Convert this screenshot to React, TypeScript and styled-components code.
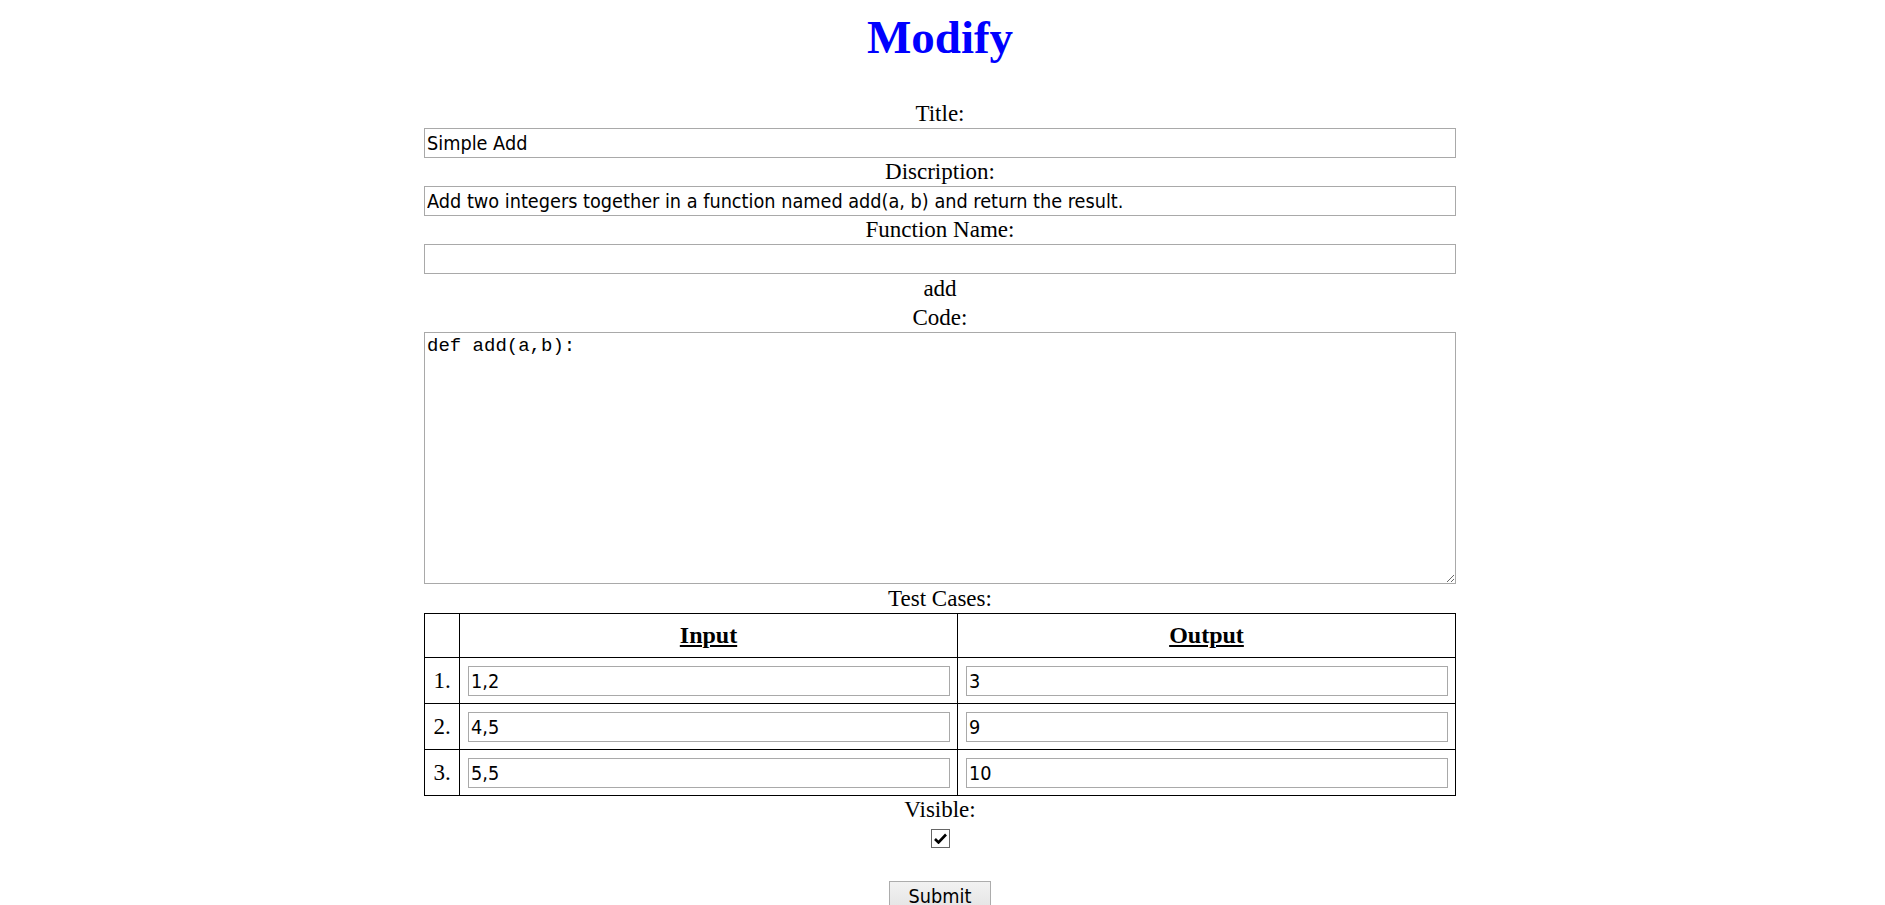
import React from "react";
import styled, { createGlobalStyle } from "styled-components";

const GlobalStyle = createGlobalStyle`
  html, body { margin: 0; padding: 0; background: #ffffff; }
  body { font-family: "Liberation Serif", "Times New Roman", serif; color: #000; }
`;

const Page = styled.div`
  display: flex;
  flex-direction: column;
  align-items: center;
  padding-right: 5px;
`;

const Heading = styled.h1`
  margin: 10px 0 36px;
  font-family: "Liberation Serif", serif;
  font-size: 47px;
  line-height: 54px;
  font-weight: bold;
  color: #0000ff;
`;

const Form = styled.form`
  width: 1032px;
  display: flex;
  flex-direction: column;
  align-items: center;
`;

const Label = styled.div<{ $h?: number }>`
  font-family: "Liberation Serif", serif;
  font-size: 23px;
  line-height: ${(p) => p.$h ?? 28}px;
  text-align: center;
`;

const TextInput = styled.input`
  box-sizing: border-box;
  width: 100%;
  height: 30px;
  margin: 0;
  padding: 0 2px;
  border: 1px solid #a9a9a9;
  font-family: "DejaVu Sans Condensed", "DejaVu Sans", sans-serif;
  font-size: 19.7px;
  color: #000;
  outline: none;
`;

const CodeArea = styled.textarea`
  box-sizing: border-box;
  width: 100%;
  height: 252px;
  margin: 0;
  padding: 2px;
  border: 1px solid #a9a9a9;
  font-family: "Liberation Mono", monospace;
  font-size: 19px;
  line-height: 22px;
  color: #000;
  outline: none;
  resize: both;
`;

const Table = styled.table`
  width: 100%;
  border-collapse: collapse;
  border: 1px solid #000;
  table-layout: fixed;
`;

const HeadCell = styled.th<{ $w?: number }>`
  border: 1px solid #000;
  height: 43px;
  padding: 0;
  font-family: "Liberation Serif", serif;
  font-size: 24px;
  font-weight: bold;
  text-decoration: underline;
  text-align: center;
  ${(p) => (p.$w ? `width: ${p.$w}px;` : "")}
`;

const NumCell = styled.td`
  border: 1px solid #000;
  padding: 8px 0 7px;
  font-family: "Liberation Serif", serif;
  font-size: 23px;
  text-align: center;
`;

const Cell = styled.td`
  border: 1px solid #000;
  padding: 8px 7px 7px 8px;
`;

const CheckBox = styled.span`
  box-sizing: border-box;
  margin-top: 5px;
  width: 19px;
  height: 19px;
  border: 1px solid #666;
  background: #fff;
  display: flex;
  align-items: center;
  justify-content: center;
`;

const SubmitButton = styled.button`
  margin-top: 33px;
  width: 102px;
  height: 30px;
  padding: 0;
  border: 1px solid #acacac;
  background: linear-gradient(#f2f2f2, #e4e4e4);
  font-family: "DejaVu Sans Condensed", "DejaVu Sans", sans-serif;
  font-size: 19.7px;
  color: #000;
`;

const DESC = "Add two integers together in a function named add(a, b) and return the result.";

const cases = [
  { input: "1,2", output: "3" },
  { input: "4,5", output: "9" },
  { input: "5,5", output: "10" },
];

export default function App() {
  return (
    <>
      <GlobalStyle />
      <Page>
        <Heading>Modify</Heading>
        <Form onSubmit={(e) => e.preventDefault()}>
          <Label>Title:</Label>
          <TextInput defaultValue="Simple Add" />
          <Label>Discription:</Label>
          <TextInput defaultValue={DESC} />
          <Label>Function Name:</Label>
          <TextInput defaultValue="" />
          <Label $h={29}>add</Label>
          <Label $h={29}>Code:</Label>
          <CodeArea defaultValue="def add(a,b):" />
          <Label $h={29}>Test Cases:</Label>
          <Table>
            <thead>
              <tr>
                <HeadCell $w={34}></HeadCell>
                <HeadCell>Input</HeadCell>
                <HeadCell>Output</HeadCell>
              </tr>
            </thead>
            <tbody>
              {cases.map((c, i) => (
                <tr key={i}>
                  <NumCell>{i + 1}.</NumCell>
                  <Cell>
                    <TextInput defaultValue={c.input} />
                  </Cell>
                  <Cell>
                    <TextInput defaultValue={c.output} />
                  </Cell>
                </tr>
              ))}
            </tbody>
          </Table>
          <Label>Visible:</Label>
          <CheckBox>
            <svg width="13" height="11" viewBox="0 0 13 11">
              <path d="M1 6 L4.5 9.5 L12 1.5" stroke="#000" strokeWidth="2.6" fill="none" />
            </svg>
          </CheckBox>
          <SubmitButton type="submit">Submit</SubmitButton>
        </Form>
      </Page>
    </>
  );
}
